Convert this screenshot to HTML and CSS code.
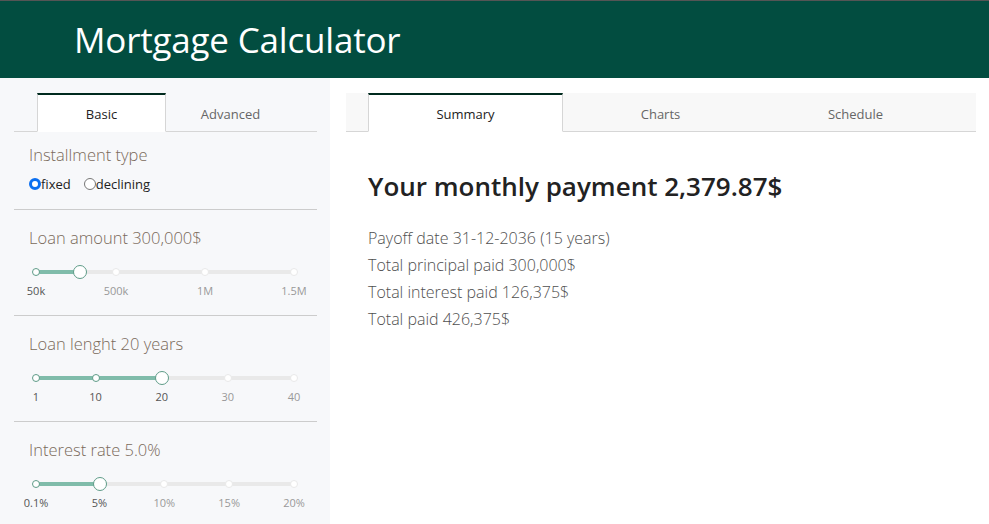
FILE: index.html
```html
<!DOCTYPE html>
<html lang="en">
<head>
<meta charset="utf-8">
<title>Mortgage Calculator</title>
<link rel="stylesheet" href="styles.css">
</head>
<body>
<header class="header">
  <h1 class="header-title">Mortgage Calculator</h1>
</header>
<div class="app">
  <aside class="sidebar">
    <div class="tabs side-tabs">
      <div class="tab tab-active side-tab">Basic</div>
      <div class="tab side-tab">Advanced</div>
    </div>
    <section class="section section-first">
      <div class="section-label">Installment type</div>
      <div class="radios">
        <label class="radio"><span class="radio-dot radio-on"></span>fixed</label>
        <label class="radio"><span class="radio-dot"></span>declining</label>
      </div>
    </section>
    <section class="section">
      <div class="section-label">Loan amount 300,000$</div>
      <div class="slider">
        <div class="rail"></div>
        <div class="fill" style="width:17.24%"></div>
        <span class="dot dot-on" style="left:0%"></span>
        <span class="dot" style="left:31.03%"></span>
        <span class="dot" style="left:65.52%"></span>
        <span class="dot" style="left:100%"></span>
        <span class="handle" style="left:17.24%"></span>
        <span class="mark mark-on" style="left:0%">50k</span>
        <span class="mark" style="left:31.03%">500k</span>
        <span class="mark" style="left:65.52%">1M</span>
        <span class="mark" style="left:100%">1.5M</span>
      </div>
    </section>
    <section class="section">
      <div class="section-label">Loan lenght 20 years</div>
      <div class="slider">
        <div class="rail"></div>
        <div class="fill" style="width:48.72%"></div>
        <span class="dot dot-on" style="left:0%"></span>
        <span class="dot dot-on" style="left:23.08%"></span>
        <span class="dot" style="left:74.36%"></span>
        <span class="dot" style="left:100%"></span>
        <span class="handle" style="left:48.72%"></span>
        <span class="mark mark-on" style="left:0%">1</span>
        <span class="mark mark-on" style="left:23.08%">10</span>
        <span class="mark mark-on" style="left:48.72%">20</span>
        <span class="mark" style="left:74.36%">30</span>
        <span class="mark" style="left:100%">40</span>
      </div>
    </section>
    <section class="section section-last">
      <div class="section-label">Interest rate 5.0%</div>
      <div class="slider">
        <div class="rail"></div>
        <div class="fill" style="width:24.62%"></div>
        <span class="dot dot-on" style="left:0%"></span>
        <span class="dot" style="left:49.75%"></span>
        <span class="dot" style="left:74.87%"></span>
        <span class="dot" style="left:100%"></span>
        <span class="handle" style="left:24.62%"></span>
        <span class="mark mark-on" style="left:0%">0.1%</span>
        <span class="mark mark-on" style="left:24.62%">5%</span>
        <span class="mark" style="left:49.75%">10%</span>
        <span class="mark" style="left:74.87%">15%</span>
        <span class="mark" style="left:100%">20%</span>
      </div>
    </section>
  </aside>
  <main class="main">
    <div class="tabs main-tabs">
      <div class="tab tab-active main-tab">Summary</div>
      <div class="tab main-tab">Charts</div>
      <div class="tab main-tab">Schedule</div>
    </div>
    <div class="summary">
      <h2 class="payment">Your monthly payment 2,379.87$</h2>
      <p class="line">Payoff date 31-12-2036 (15 years)</p>
      <p class="line">Total principal paid 300,000$</p>
      <p class="line">Total interest paid 126,375$</p>
      <p class="line">Total paid 426,375$</p>
    </div>
  </main>
</div>
</body>
</html>
```

FILE: styles.css
```css
* { box-sizing: border-box; }
html, body { margin: 0; padding: 0; height: 100%; }
body {
  font-family: "Open Sans", "Noto Sans", "Liberation Sans", sans-serif;
  color: #222;
  background: #fff;
  overflow: hidden;
}
.header {
  height: 78px;
  background: #024d40;
  border-top: 1px solid #555;
  display: flex;
  align-items: center;
  padding-left: 74px;
}
.header-title {
  margin: 0;
  font-weight: 400;
  font-size: 35px;
  color: #fff;
  letter-spacing: -0.2px;
}
.app {
  display: grid;
  grid-template-columns: 330px 1fr;
  height: calc(100% - 78px);
}
.sidebar {
  background: #f7f8fa;
  padding: 15px 13px 0 14px;
}
.tabs {
  display: flex;
  border-bottom: 1px solid #d6d6d6;
  height: 39px;
}
.side-tabs { padding-left: 23px; }
.tab {
  display: flex;
  align-items: center;
  justify-content: center;
  font-size: 13px;
  color: #666;
  height: 39px;
  margin-bottom: -1px;
  border: 1px solid transparent;
  border-top: 2px solid transparent;
  padding-top: 2px;
}
.tab-active {
  background: #fff;
  color: #222;
  border-color: #d6d6d6;
  border-top-color: #002a1e;
  border-bottom-color: #fff;
}
.side-tab { width: 129px; }
.main { padding: 15px 13px 0 16px; }
.main-tabs { background: #f8f8f8; padding-left: 22px; }
.main-tab { width: 195px; }
.section {
  border-bottom: 1px solid #cccccc;
  padding: 17px 0 0 15px;
  height: 106px;
}
.section-first { height: 78px; padding-top: 12px; }
.section-last { border-bottom: none; }
.section-label {
  font-size: 16.5px;
  font-weight: 300;
  color: #7a6a5b;
  line-height: 22px;
}
.radios { display: flex; gap: 13px; margin-top: 9px; }
.radio {
  display: flex;
  align-items: center;
  font-size: 13px;
  color: #222;
}
.radio-dot {
  width: 12px;
  height: 12px;
  border-radius: 50%;
  border: 1px solid #777;
  background: #fff;
  display: inline-block;
}
.radio-on {
  border: 3px solid #0b6ff0;
  background: #fff;
}
.slider {
  position: relative;
  margin: 21px 23px 0 7px;
  height: 4px;
}
.rail {
  height: 4px;
  border-radius: 2px;
  background: #e9e9e9;
}
.fill {
  position: absolute;
  left: 0;
  top: 0;
  height: 4px;
  border-radius: 2px;
  background: #80bcaa;
}
.dot {
  position: absolute;
  top: -2px;
  width: 8px;
  height: 8px;
  margin-left: -4px;
  border-radius: 50%;
  background: #fff;
  border: 1px solid #e9e9e9;
}
.dot-on { border-color: #5f9c88; }
.handle {
  position: absolute;
  top: -5px;
  width: 14px;
  height: 14px;
  margin-left: -7px;
  border-radius: 50%;
  background: #fff;
  border: 1.5px solid #5f9c88;
}
.mark {
  position: absolute;
  top: 13px;
  transform: translateX(-50%);
  font-size: 11px;
  color: #999;
  white-space: nowrap;
}
.mark-on { color: #555; }
.summary { padding: 37px 0 0 22px; }
.payment {
  margin: 0 0 22px;
  font-size: 26px;
  font-weight: 600;
  color: #222;
  line-height: 34px;
}
.line {
  margin: 0;
  font-size: 16px;
  font-weight: 300;
  line-height: 27px;
  color: #4f4f4f;
}
```
